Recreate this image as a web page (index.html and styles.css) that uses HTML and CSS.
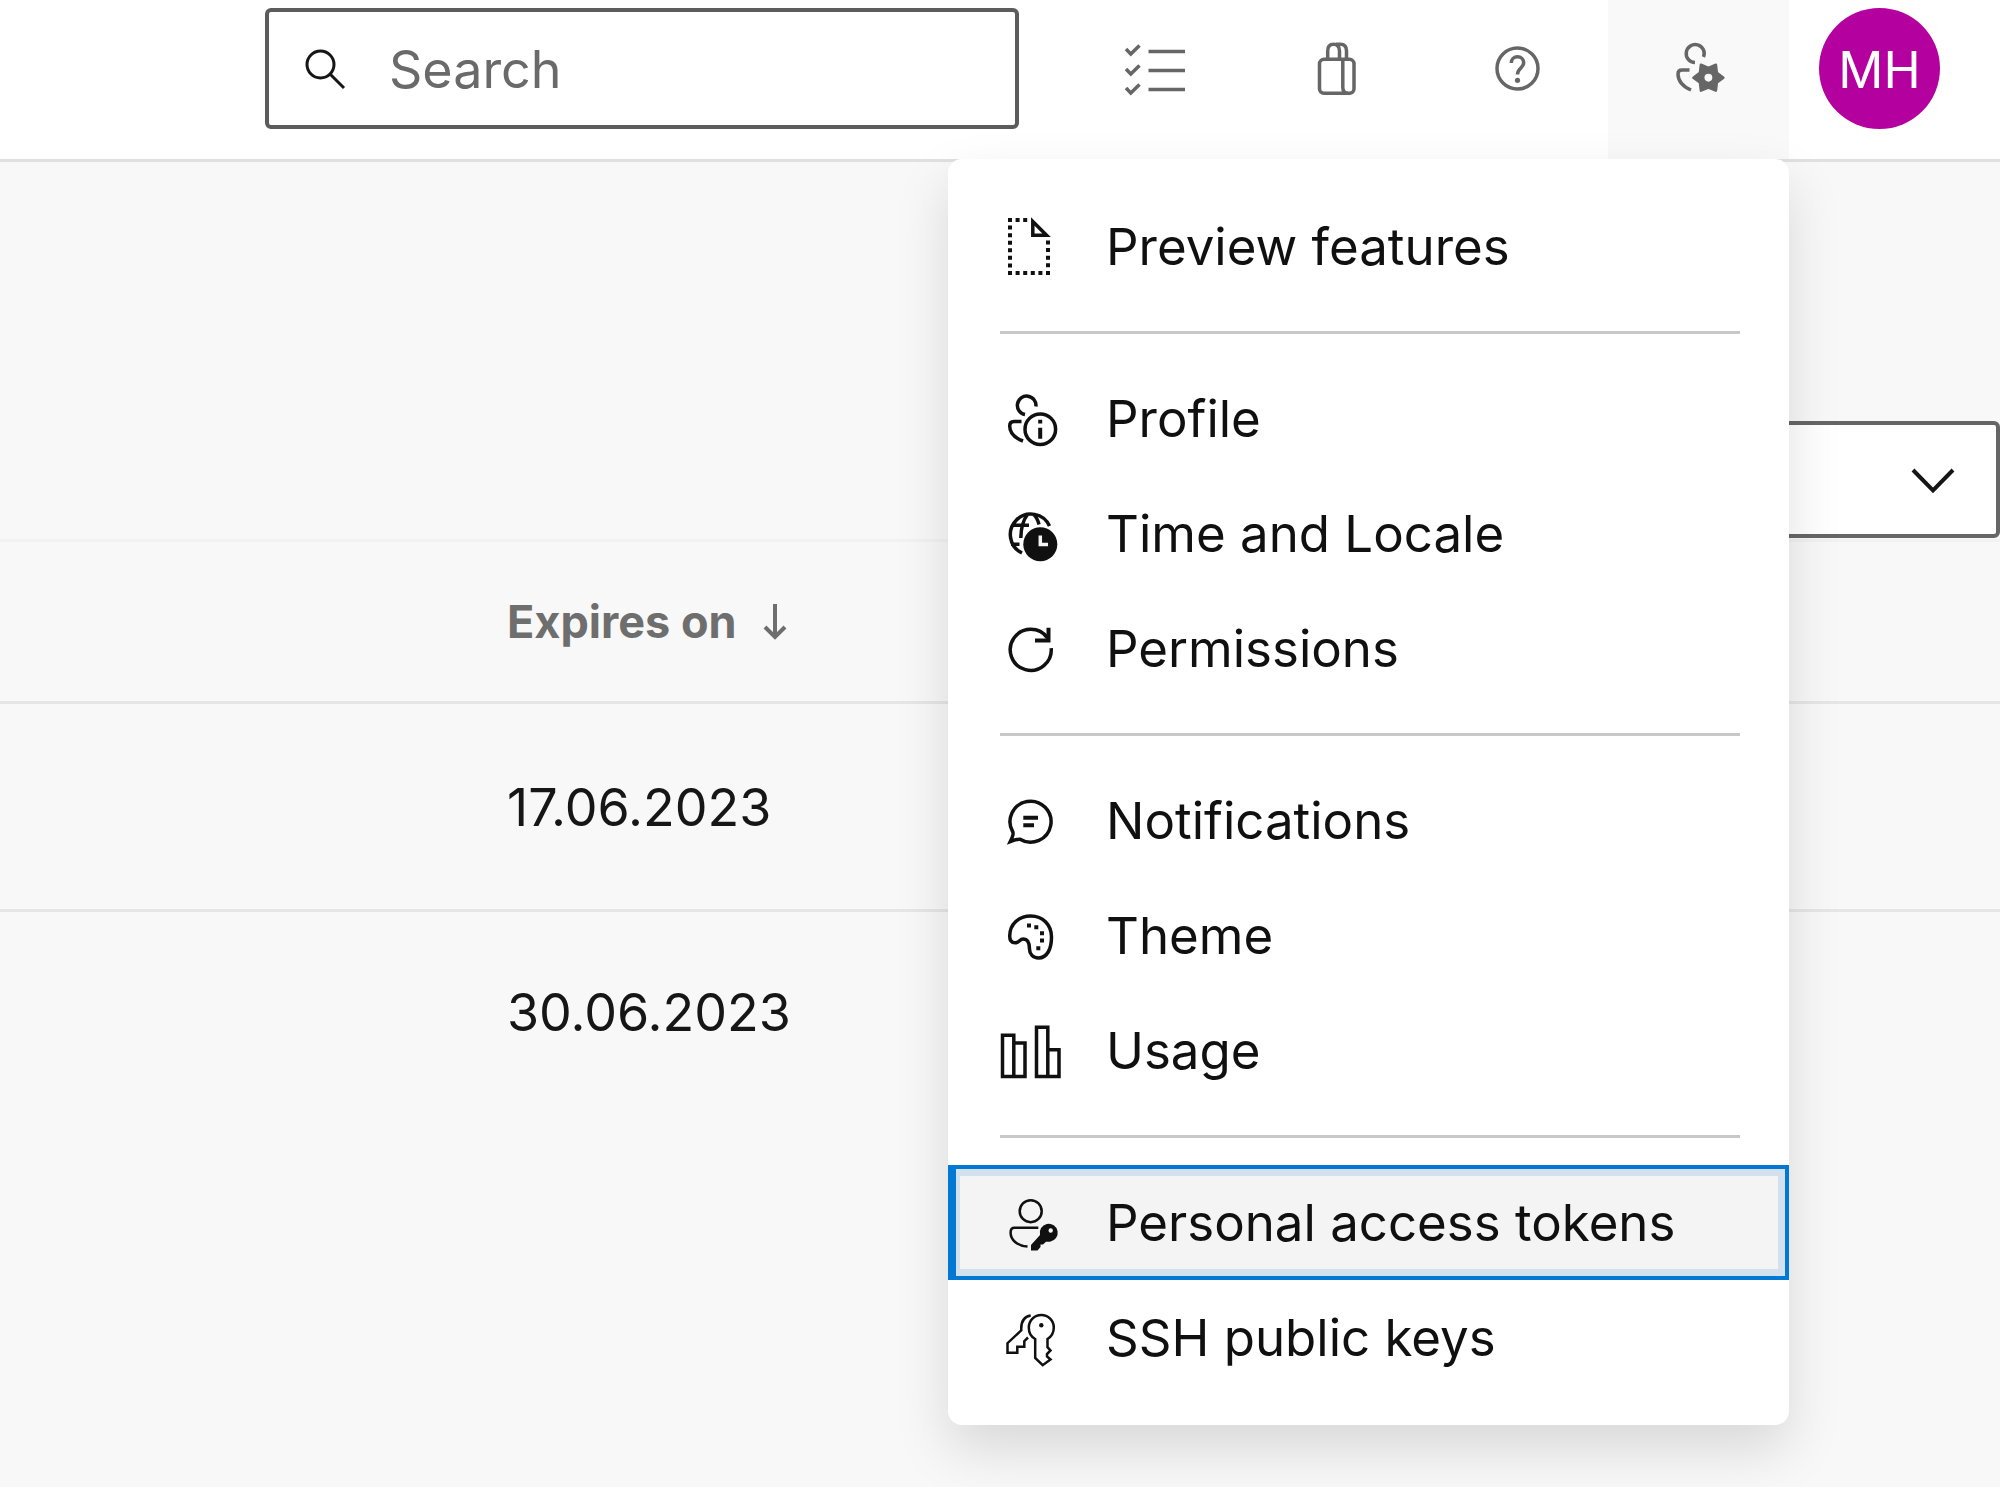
FILE: index.html
```html
<!DOCTYPE html>
<html lang="en">
<head>
<meta charset="utf-8">
<meta name="viewport" content="width=device-width, initial-scale=1">
<title>Personal access tokens</title>
<link rel="stylesheet" href="styles.css">
</head>
<body>
<header class="topbar">
  <label class="search">
    <svg class="search-icon" viewBox="0 0 40 40" aria-hidden="true"><circle cx="15.5" cy="15.5" r="13.5"/><path d="M25 25 39 39"/></svg>
    <input class="search-input" type="search" placeholder="Search" aria-label="Search">
  </label>
  <nav class="actions" aria-label="Header">
    <button class="action" type="button" aria-label="Work items">
      <svg class="icon" viewBox="0 0 60 60"><path d="M0 10 4.800 15 13.500 6.500M0 30 4.800 35 13.500 26.500M0 49 4.800 54 13.500 45.500M22.500 12.500H59M22.500 31.500H59M22.500 50.500H59"/></svg>
    </button>
    <button class="action" type="button" aria-label="Marketplace">
      <svg class="icon" viewBox="0 0 60 60"><rect x="12.500" y="20.300" width="34.500" height="34" rx="4.500"/><path d="M35.800 20.300V48Q35.800 54.300 41 54.300M20.700 20V12Q20.700 5.200 26.500 5.200T32.500 12V20M29 5.200H33.500Q39.500 5.200 39.500 12V20"/></svg>
    </button>
    <button class="action" type="button" aria-label="Help">
      <svg class="icon" viewBox="0 0 60 60"><circle cx="29.500" cy="29.500" r="20.500"/><path d="M23.300 24C23.300 20 26 17.800 29.500 17.800S35.700 20.300 35.700 23.800C35.700 29 29.500 29 29.500 35.500"/><circle class="solid" cx="29.500" cy="41.300" r="2.600"/></svg>
    </button>
    <div class="settings">
      <button class="action action-open" type="button" aria-label="User settings" aria-expanded="true">
        <svg class="icon" viewBox="0 0 60 60"><path d="M26 23.500A9 9 0 1 1 34.500 18"/><path d="M20.500 31H13C10.500 31 9 32.500 9 35 9 42.500 14 47.500 22 51"/><path class="solid gear" fill-rule="evenodd" d="M54.400 38.700 47.900 43.600 46.900 51.700 39.400 48.500 31.900 51.700 30.900 43.600 24.400 38.700 30.900 33.800 31.900 25.700 39.400 28.900 46.900 25.700 47.900 33.800ZM39.400 33.500A5.200 5.200 0 1 0 39.400 43.900 5.200 5.200 0 1 0 39.400 33.500Z"/></svg>
      </button>
      <ul class="menu">
        <li><a class="menu-item" href="#preview"><svg class="icon dotted" viewBox="0 0 60 60"><path stroke-dasharray="4 3.57" d="M10 1V58"/><path stroke-dasharray="4 3.600" d="M8 56H50M8 3H28M48 23.500V58"/><path class="fold" d="M32.800 4.500V18.300H46.600Z"/></svg>Preview features</a></li>
        <li class="separator"></li>
        <li><a class="menu-item" href="#profile"><svg class="icon" viewBox="0 0 60 60"><path d="M25 25.500A9.300 9.300 0 1 1 35.900 17.500"/><path d="M21.500 32.500H14C11 32.500 9.700 34 9.700 37 9.700 43.500 15 49 23 52"/><circle cx="40.300" cy="40.200" r="15.300"/><path class="thick" d="M40.200 30.800V34.500M40.200 38.800V49.800"/></svg>Profile</a></li>
        <li><a class="menu-item" href="#time"><svg class="icon" viewBox="0 0 60 60"><path d="M22 49A20.500 20.500 0 1 1 49.500 22M12.500 21.200H29M11 40.200H19.500M27.500 10.500C23.500 15.500 21 25 20.800 34M33.500 10.500C36 12.500 38 16.500 39 20.500"/><circle class="solid" cx="40.300" cy="40.200" r="17"/><path class="hand" d="M40.300 31.500V40.500H48"/></svg>Time and Locale</a></li>
        <li><a class="menu-item" href="#permissions"><svg class="icon" viewBox="0 0 60 60"><path d="M47.500 19A20.500 20.500 0 1 0 51.200 29.200"/><path class="thick" d="M48.500 8.800V21.500H35"/></svg>Permissions</a></li>
        <li class="separator"></li>
        <li><a class="menu-item" href="#notifications"><svg class="icon" viewBox="0 0 60 60"><path d="M20 48.300A20.500 20.500 0 1 0 12.800 41Q14 43 10.300 50.500 17 48 20 48.300Z"/><path class="thick" d="M23.300 26.800H38M23.300 34.200H34"/></svg>Notifications</a></li>
        <li><a class="menu-item" href="#theme"><svg class="icon" viewBox="0 0 60 60"><path d="M9.700 30C9.700 18 19 10 30.700 10 43 10 51.500 19 51.500 31 51.500 43 47 52 38.500 52 33 52 29.500 48 29.500 43 29.500 36.500 28 33 23.300 33 19.500 33 19.500 36.800 15 36.800 11.500 36.800 9.700 34 9.700 30Z"/><path class="spots" d="M27 19.500H31M34.300 21.200H38.300M40 27.200H44M40 34.500H44M36.300 42.200H40.300"/></svg>Theme</a></li>
        <li><a class="menu-item" href="#usage"><svg class="icon" viewBox="0 0 60 60"><path d="M2.500 14.200H13.800V55.500H2.500ZM13.800 22H25V55.500H13.800M36.500 6.200H47.800V55.500H36.500ZM47.800 28.800H59V55.500H47.800"/></svg>Usage</a></li>
        <li class="separator"></li>
        <li><a class="menu-item menu-item-focused" href="#tokens"><svg class="icon fine" viewBox="0 0 60 60"><circle cx="30.700" cy="18.200" r="11"/><path d="M38.300 34.800H14.500C11.500 34.800 10.600 36.500 10.600 39.500 10.600 47 17 52.800 27.500 53.500"/><path class="solid" fill-rule="evenodd" d="M40 42A9 9 0 1 1 50 48.700H46L43 51.500H40.500V54L37.500 57.500H31V52ZM50.700 35.300A2.200 2.200 0 1 0 50.700 39.700 2.200 2.200 0 1 0 50.700 35.300Z"/></svg>Personal access tokens</a></li>
        <li><a class="menu-item" href="#ssh"><svg class="icon fine" viewBox="0 0 60 60"><path d="M35.200 31C30.500 28.500 28.800 24 28.800 19.500A12.500 12.500 0 0 1 53.800 19.500C53.800 24.500 51.500 28.500 47.500 31V39.200L50.500 42.500 47 46V48.500L50.500 51.500 42.700 57.200 35.200 50Z"/><circle class="solid" cx="41.300" cy="17.200" r="2.200"/><path d="M30.700 7.500C24.500 8.500 20.800 13.500 21.300 22.300L7.500 35.200V44.800H17.300V38.700H24.300V33.200L28 29.500"/></svg>SSH public keys</a></li>
      </ul>
    </div>
  </nav>
  <button class="avatar" type="button" aria-label="Account manager">MH</button>
</header>
<main class="content">
  <div class="filters">
    <button class="filter" type="button" aria-label="Filter tokens">
      <svg class="chevron" viewBox="0 0 44 26"><path d="M2 3 22 23.500 42 3"/></svg>
    </button>
  </div>
  <table class="tokens">
    <thead>
      <tr><th class="lead"></th><th class="expires" scope="col"><span class="sort">Expires on <svg class="sort-arrow" viewBox="0 0 24 40"><path d="M12 2V35M2 25 12 35 22 25"/></svg></span></th></tr>
    </thead>
    <tbody>
      <tr><td></td><td class="expires">17.06.2023</td></tr>
      <tr><td></td><td class="expires">30.06.2023</td></tr>
    </tbody>
  </table>
</main>
</body>
</html>
```

FILE: styles.css
```css
* { box-sizing: border-box; }

body {
  margin: 0;
  min-height: 100vh;
  background: #f8f8f8;
  color: #161616;
  font-family: Inter, "Liberation Sans", sans-serif;
  font-size: 52px;
  line-height: 64px;
}

button, input { font: inherit; }

svg {
  display: block;
  flex: none;
  fill: none;
  stroke: currentColor;
  overflow: visible;
}

/* Top bar */
.topbar {
  display: flex;
  align-items: flex-start;
  padding: 0 60px 0 265px;
  background: #fff;
  border-bottom: 3px solid #e0e0e0;
}

.search {
  display: flex;
  flex: 1;
  align-items: center;
  gap: 44px;
  min-width: 0;
  height: 121px;
  margin: 8px 46px 0 0;
  padding: 0 36px;
  border: 4px solid #5c5c5c;
  border-radius: 6px;
}

.search-icon { width: 40px; height: 40px; stroke-width: 3; }

.search-input {
  flex: 1;
  min-width: 0;
  padding: 2px 0 0;
  border: 0;
  outline: 0;
  background: none;
}

.search-input::placeholder { color: #6a6a6a; opacity: 1; }

.actions { display: flex; }

.action {
  display: flex;
  justify-content: center;
  width: 181px;
  height: 159px;
  padding: 39px 0 0;
  border: 0;
  background: none;
  color: #666;
}

.action-open { background: #f9f9f9; }

.icon { width: 60px; height: 60px; stroke-width: 3.5; }
.fine { stroke-width: 2.5; }
.thick, .spots { stroke-width: 4; }
.dotted { stroke-width: 4; }
.fold { stroke-width: 3.5; }
.solid { fill: currentColor; stroke: none; }
.gear { stroke: currentColor; stroke-width: 2.5; stroke-linejoin: round; }
.hand { stroke: #f4f4f4; }

.avatar {
  width: 121px;
  height: 121px;
  margin: 8px 0 0 30px;
  padding: 2px 0 0;
  border: 0;
  border-radius: 50%;
  background: #b4009e;
  color: #fff;
  font-size: 50px;
}

/* Settings menu */
.settings { position: relative; }

.menu {
  position: absolute;
  top: 100%;
  right: 0;
  z-index: 1;
  width: 841px;
  margin: 0;
  padding: 30px 0;
  list-style: none;
  background: #fff;
  border-radius: 14px;
  box-shadow: 0 24px 54px rgba(0, 0, 0, 0.13);
  color: #101010;
}

.menu-item {
  display: flex;
  align-items: center;
  gap: 46px;
  height: 115px;
  padding: 0 52px;
  color: inherit;
  font-size: 51px;
  text-decoration: none;
  white-space: nowrap;
}

.menu-item-focused {
  padding: 0 48px 0 44px;
  border: 4px solid #0078d4;
  border-left-width: 8px;
  background: #f4f4f4;
  box-shadow: inset 4px 7px 0 #d3e0ed, inset -7px -7px 0 #d3e0ed;
}

.separator {
  height: 3px;
  margin: 27px 49px 27px 52px;
  background: #c8c8c8;
}

/* Token list */
.filters {
  display: flex;
  justify-content: flex-end;
  padding: 259px 0 1px;
}

.filter {
  display: flex;
  align-items: center;
  justify-content: flex-end;
  width: 500px;
  height: 117px;
  padding: 0 41px;
  border: 4px solid #666;
  border-radius: 6px;
  background: #fff;
  color: #161616;
}

.chevron { width: 44px; height: 26px; stroke-width: 4; }

.tokens {
  width: 100%;
  border-collapse: collapse;
  border-top: 3px solid #f2f2f2;
}

.tokens th { height: 162px; padding: 0; border-bottom: 3px solid #e6e6e6; }
.tokens td { height: 208px; padding: 3px 0 0; border-bottom: 3px solid #e6e6e6; }
.tokens tr:last-child td { height: 200px; border-bottom: 0; }
.tokens .lead { width: 25%; }
.tokens .expires { padding-left: 7px; text-align: left; }
.tokens th.expires { color: #6e6e6e; font-size: 45px; font-weight: 700; }

.sort { display: flex; align-items: center; gap: 26px; }
.sort-arrow { width: 24px; height: 40px; stroke-width: 4; }
```
